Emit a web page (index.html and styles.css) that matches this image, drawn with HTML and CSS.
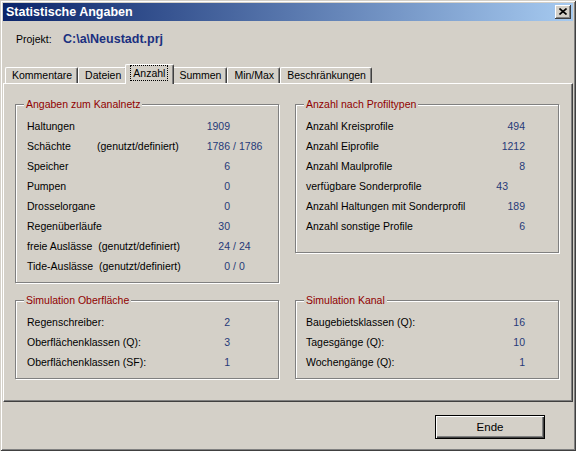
FILE: index.html
```html
<!DOCTYPE html>
<html>
<head>
<meta charset="utf-8">
<link rel="stylesheet" href="styles.css">
</head>
<body>
<div class="window">
  <div class="titlebar">
    <span class="title">Statistische Angaben</span>
    <span class="close"><svg width="8" height="7" viewBox="0 0 8 7"><path d="M0.5 0.5L7.5 6.5M7.5 0.5L0.5 6.5" stroke="#000" stroke-width="1.6" fill="none"/></svg></span>
  </div>
  <div class="project">
    <span class="project-label">Projekt:</span>
    <span class="project-path">C:\a\Neustadt.prj</span>
  </div>
  <div class="tabctrl">
    <div class="tabs">
      <div class="tab">Kommentare</div>
      <div class="tab">Dateien</div>
      <div class="tab active"><span class="focus">Anzahl</span></div>
      <div class="tab">Summen</div>
      <div class="tab">Min/Max</div>
      <div class="tab">Beschränkungen</div>
    </div>
    <div class="panel">
      <div class="groups">
        <div class="group">
          <div class="group-title">Angaben zum Kanalnetz</div>
          <div class="rows rows-left">
            <div class="row"><span class="label">Haltungen</span><span class="num">1909</span></div>
            <div class="row"><span class="label"><span class="lbl-main">Schächte</span>(genutzt/definiert)</span><span class="num">1786</span><span class="sep">/</span><span class="num2">1786</span></div>
            <div class="row"><span class="label">Speicher</span><span class="num">6</span></div>
            <div class="row"><span class="label">Pumpen</span><span class="num">0</span></div>
            <div class="row"><span class="label">Drosselorgane</span><span class="num">0</span></div>
            <div class="row"><span class="label">Regenüberläufe</span><span class="num">30</span></div>
            <div class="row"><span class="label">freie Auslässe&nbsp; (genutzt/definiert)</span><span class="num">24</span><span class="sep">/</span><span class="num2">24</span></div>
            <div class="row"><span class="label">Tide-Auslässe&nbsp; (genutzt/definiert)</span><span class="num">0</span><span class="sep">/</span><span class="num2">0</span></div>
          </div>
        </div>
        <div class="group group-profiles">
          <div class="group-title">Anzahl nach Profiltypen</div>
          <div class="rows rows-right">
            <div class="row"><span class="label">Anzahl Kreisprofile</span><span class="num">494</span></div>
            <div class="row"><span class="label">Anzahl Eiprofile</span><span class="num">1212</span></div>
            <div class="row"><span class="label">Anzahl Maulprofile</span><span class="num">8</span></div>
            <div class="row"><span class="label">verfügbare Sonderprofile</span><span class="num num-offset">43</span></div>
            <div class="row"><span class="label">Anzahl Haltungen mit Sonderprofil</span><span class="num">189</span></div>
            <div class="row"><span class="label">Anzahl sonstige Profile</span><span class="num">6</span></div>
          </div>
        </div>
        <div class="group">
          <div class="group-title">Simulation Oberfläche</div>
          <div class="rows rows-left">
            <div class="row"><span class="label">Regenschreiber:</span><span class="num">2</span></div>
            <div class="row"><span class="label">Oberflächenklassen (Q):</span><span class="num">3</span></div>
            <div class="row"><span class="label">Oberflächenklassen (SF):</span><span class="num">1</span></div>
          </div>
        </div>
        <div class="group">
          <div class="group-title">Simulation Kanal</div>
          <div class="rows rows-right">
            <div class="row"><span class="label">Baugebietsklassen (Q):</span><span class="num">16</span></div>
            <div class="row"><span class="label">Tagesgänge (Q):</span><span class="num">10</span></div>
            <div class="row"><span class="label">Wochengänge (Q):</span><span class="num">1</span></div>
          </div>
        </div>
      </div>
    </div>
  </div>
  <div class="footer">
    <button class="btn">Ende</button>
  </div>
</div>
</body>
</html>
```
FILE: styles.css
```css
* { box-sizing: border-box; }
html, body { margin: 0; padding: 0; }
body {
  width: 576px;
  height: 451px;
  overflow: hidden;
  background: #d4d0c8;
  font-family: "Liberation Sans", Arial, sans-serif;
  font-size: 10.5px;
  color: #000;
}
.window {
  width: 576px;
  height: 451px;
  padding: 3px;
  background: #d4d0c8;
  box-shadow: inset 1px 1px 0 #d4d0c8, inset -1px -1px 0 #404040, inset 2px 2px 0 #fff, inset -2px -2px 0 #808080;
  display: flex;
  flex-direction: column;
}
.titlebar {
  height: 18px;
  background: linear-gradient(to right, #0a246a, #a6caf0);
  display: flex;
  align-items: center;
  justify-content: space-between;
  padding: 0 2px 0 3px;
}
.title {
  color: #fff;
  font-weight: bold;
  font-size: 12.5px;
  line-height: 18px;
}
.close {
  width: 16px;
  height: 14px;
  background: #d4d0c8;
  box-shadow: inset -1px -1px 0 #404040, inset 1px 1px 0 #fff, inset -2px -2px 0 #808080;
  display: flex;
  align-items: center;
  justify-content: center;
  padding: 0 1px 1px 0;
}
.project {
  margin-top: 9px;
  height: 18px;
  display: flex;
  align-items: center;
  padding-left: 13px;
}
.project-label {
  width: 47px;
}
.project-path {
  font-weight: bold;
  font-size: 12.5px;
  color: #1b3080;
}
.tabctrl {
  margin-top: 16px;
}
.tabs {
  height: 19px;
  display: flex;
  align-items: flex-end;
  padding-left: 2px;
}
.tab {
  height: 16px;
  line-height: 15px;
  padding: 0 5px 0 6px;
  border-top: 1px solid #fff;
  border-left: 1px solid #fff;
  border-right: 1px solid #404040;
  box-shadow: inset -1px 0 0 #808080;
  border-radius: 2px 2px 0 0;
  white-space: nowrap;
}
.tab.active {
  height: 20px;
  margin: 0 -2px -1px;
  padding: 0 6px 0 5px;
  line-height: 17px;
  position: relative;
  z-index: 1;
  background: #d4d0c8;
}
.focus {
  outline: 1px dotted #000;
  outline-offset: 0;
  padding: 0 2px;
  display: inline-block;
  line-height: 14px;
  margin-top: 1px;
}
.panel {
  height: 319px;
  border-top: 1px solid #fff;
  border-left: 1px solid #fff;
  border-right: 1px solid #404040;
  border-bottom: 1px solid #404040;
  box-shadow: inset -1px -1px 0 #808080;
  padding: 20px 0 0 11px;
}
.groups {
  display: grid;
  grid-template-columns: 264px 264px;
  column-gap: 16px;
  row-gap: 17px;
  align-items: start;
}
.group {
  border: 1px solid #808080;
  box-shadow: inset 1px 1px 0 #fff, 1px 1px 0 #fff;
  padding-bottom: 6px;
}
.group-profiles {
  padding-bottom: 16px;
}
.group-title {
  width: fit-content;
  margin: -8px 0 0 8px;
  padding: 0 2px;
  line-height: 14px;
  background: #d4d0c8;
  color: #900000;
}
.rows {
  margin-top: 5px;
}
.row {
  height: 20px;
  line-height: 20px;
  display: grid;
  white-space: nowrap;
}
.rows-left {
  padding-left: 11px;
}
.rows-left .row {
  grid-template-columns: 173px 30px 9px auto;
}
.rows-right {
  padding-left: 10px;
  padding-right: 33px;
}
.rows-right .row {
  grid-template-columns: 1fr auto;
}
.num, .num2, .sep {
  color: #263a78;
}
.num { text-align: right; }
.sep { text-align: center; }
.num-offset { padding-right: 17px; }
.lbl-main {
  display: inline-block;
  width: 70px;
}
.footer {
  display: flex;
  justify-content: flex-end;
  padding: 13px 28px 0 0;
}
.btn {
  width: 110px;
  height: 24px;
  border: 1px solid #000;
  background: #d4d0c8;
  box-shadow: inset 1px 1px 0 #fff, inset -1px -1px 0 #404040, inset -2px -2px 0 #808080;
  font-family: "Liberation Sans", Arial, sans-serif;
  font-size: 11.5px;
  color: #000;
  padding: 0;
}
```
